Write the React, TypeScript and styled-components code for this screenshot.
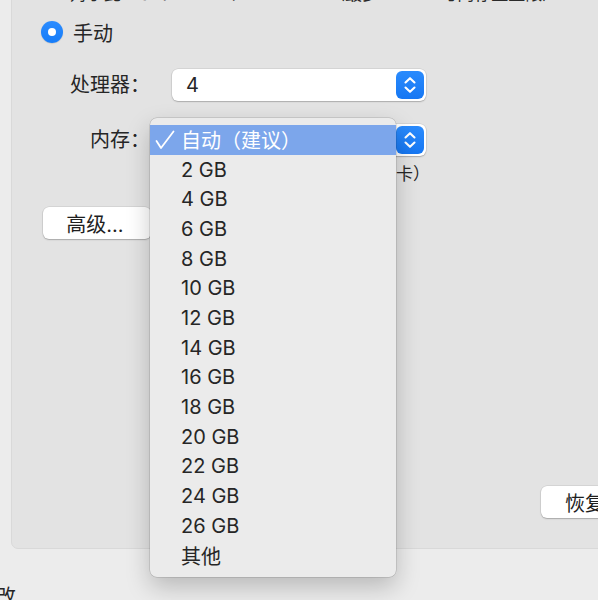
import React from "react";
import styled, { createGlobalStyle } from "styled-components";

const Global = createGlobalStyle`
  html, body {
    margin: 0;
    padding: 0;
    width: 598px;
    height: 600px;
    overflow: hidden;
    background: #ececec;
  }
  body {
    font-family: Inter, "Noto Sans CJK SC", sans-serif;
    color: #262626;
    -webkit-font-smoothing: antialiased;
  }
`;

const Page = styled.div`
  display: flex;
  flex-direction: column;
  margin-top: -30px;
  padding-left: 11px;
  width: 760px;
`;

const GroupBox = styled.section`
  box-sizing: border-box;
  width: 720px;
  height: 579px;
  background: #e3e3e3;
  border: 1px solid #d9d9d9;
  border-radius: 7px;
  padding: 15px 21px 30px 29px;
  display: flex;
  flex-direction: column;
`;

const InfoLine = styled.div`
  margin-left: 29px;
  margin-top: -4px;
  font-size: 17px;
  line-height: 24px;
  height: 24px;
  white-space: nowrap;
  color: #2a2a2a;
`;

const RadioRow = styled.label`
  margin-top: 14px;
  display: flex;
  align-items: center;
  gap: 10px;
  height: 24px;
  font-size: 20px;
`;

const Radio = styled.span`
  box-sizing: border-box;
  width: 22px;
  height: 22px;
  border-radius: 50%;
  background: linear-gradient(#2b8cff, #167cf8);
  display: flex;
  align-items: center;
  justify-content: center;
  box-shadow: 0 0.5px 1px rgba(0, 0, 0, 0.2);
  &::after {
    content: "";
    width: 8px;
    height: 8px;
    border-radius: 50%;
    background: #fff;
  }
`;

const FormGrid = styled.div`
  margin-top: 25px;
  display: grid;
  grid-template-columns: 109px 254px;
  grid-auto-rows: 32px;
  column-gap: 22px;
  row-gap: 23px;
`;

const Label = styled.div`
  justify-self: end;
  align-self: center;
  font-size: 20px;
  line-height: 24px;
  white-space: nowrap;
`;

const PopupWrap = styled.div`
  position: relative;
`;

const Popup = styled.div`
  box-sizing: border-box;
  height: 32px;
  background: #fff;
  border-radius: 6px;
  box-shadow: 0 0 0 0.5px rgba(0, 0, 0, 0.12), 0 1px 1.5px rgba(0, 0, 0, 0.2);
  display: flex;
  align-items: center;
  justify-content: space-between;
  padding: 0 2px 0 14px;
  font-size: 20px;
`;

const Stepper = styled.span`
  width: 28px;
  height: 28px;
  border-radius: 6px;
  background: linear-gradient(#2a8bfd, #1677f3);
  display: flex;
  align-items: center;
  justify-content: center;
`;

const Note = styled.div`
  margin-left: 131px;
  margin-top: 7px;
  width: 258px;
  text-align: right;
  font-size: 17px;
  line-height: 22px;
  white-space: nowrap;
`;

const PushButton = styled.button<{ $width?: number }>`
  box-sizing: border-box;
  height: 32px;
  width: ${(p) => (p.$width ? `${p.$width}px` : "auto")};
  border: none;
  background: #fff;
  border-radius: 6px;
  box-shadow: 0 0 0 0.5px rgba(0, 0, 0, 0.12), 0 1px 1.5px rgba(0, 0, 0, 0.22);
  font-family: inherit;
  font-size: 20px;
  color: #1e1e1e;
  white-space: nowrap;
  cursor: default;
`;

const AdvancedButton = styled(PushButton)`
  margin-top: 22px;
  margin-left: 2px;
  padding: 0 4px 0 0;
  align-self: flex-start;
`;

const BottomRow = styled.div`
  margin-top: auto;
  display: flex;
  justify-content: flex-end;
`;

const RestoreButton = styled(PushButton)`
  padding: 0 24px;
`;

const CutText = styled.div`
  margin-top: 36px;
  margin-left: -35px;
  font-size: 20px;
  line-height: 24px;
  white-space: nowrap;
`;

const Menu = styled.ul`
  position: absolute;
  left: -22px;
  top: -6px;
  width: 246px;
  box-sizing: border-box;
  margin: 0;
  padding: 7px 0;
  list-style: none;
  background: #ebebeb;
  border-radius: 7px;
  box-shadow: 0 0 0 0.5px rgba(0, 0, 0, 0.2), 0 10px 24px rgba(0, 0, 0, 0.22);
  z-index: 10;
`;

const MenuItem = styled.li<{ $selected?: boolean }>`
  display: grid;
  grid-template-columns: 31px 1fr;
  align-items: center;
  height: 29.7px;
  font-size: 20px;
  background: ${(p) => (p.$selected ? "#7ca6eb" : "transparent")};
  color: ${(p) => (p.$selected ? "#ffffff" : "#262626")};
  white-space: nowrap;
`;

const CheckCell = styled.span`
  display: flex;
  align-items: center;
  padding-left: 4px;
`;

const StepperIcon = () => (
  <svg width="28" height="28" viewBox="0 0 28 28" fill="none">
    <path d="M9.5 11.5 L14 7.2 L18.5 11.5" stroke="#fff" strokeWidth="2.1" strokeLinecap="round" strokeLinejoin="round" />
    <path d="M9.5 16.5 L14 20.8 L18.5 16.5" stroke="#fff" strokeWidth="2.1" strokeLinecap="round" strokeLinejoin="round" />
  </svg>
);

const CheckIcon = () => (
  <svg width="22" height="22" viewBox="0 0 22 22" fill="none">
    <path d="M2.5 12 L7 19 L19.5 2.5" stroke="#fff" strokeWidth="1.8" strokeLinecap="round" strokeLinejoin="round" />
  </svg>
);

const memoryOptions = [
  "自动（建议）",
  "2 GB",
  "4 GB",
  "6 GB",
  "8 GB",
  "10 GB",
  "12 GB",
  "14 GB",
  "16 GB",
  "18 GB",
  "20 GB",
  "22 GB",
  "24 GB",
  "26 GB",
  "其他",
];

export default function App() {
  return (
    <>
      <Global />
      <Page>
        <GroupBox>
          <InfoLine>对于此 Mac：4 CPU、8 GB RAM（最多 4 CPU 与内存量上限）</InfoLine>
          <RadioRow>
            <Radio />
            手动
          </RadioRow>
          <FormGrid>
            <Label>处理器：</Label>
            <Popup>
              <span>4</span>
              <Stepper>
                <StepperIcon />
              </Stepper>
            </Popup>
            <Label>内存：</Label>
            <PopupWrap>
              <Popup>
                <span>自动（建议）</span>
                <Stepper>
                  <StepperIcon />
                </Stepper>
              </Popup>
              <Menu>
                {memoryOptions.map((opt, i) => (
                  <MenuItem key={opt} $selected={i === 0}>
                    <CheckCell>{i === 0 ? <CheckIcon /> : null}</CheckCell>
                    <span>{opt}</span>
                  </MenuItem>
                ))}
              </Menu>
            </PopupWrap>
          </FormGrid>
          <Note>（取决于 Mac 的内存和显卡）</Note>
          <AdvancedButton $width={108}>高级...</AdvancedButton>
          <BottomRow>
            <RestoreButton>恢复默认设置</RestoreButton>
          </BottomRow>
        </GroupBox>
        <CutText>更改</CutText>
      </Page>
    </>
  );
}
